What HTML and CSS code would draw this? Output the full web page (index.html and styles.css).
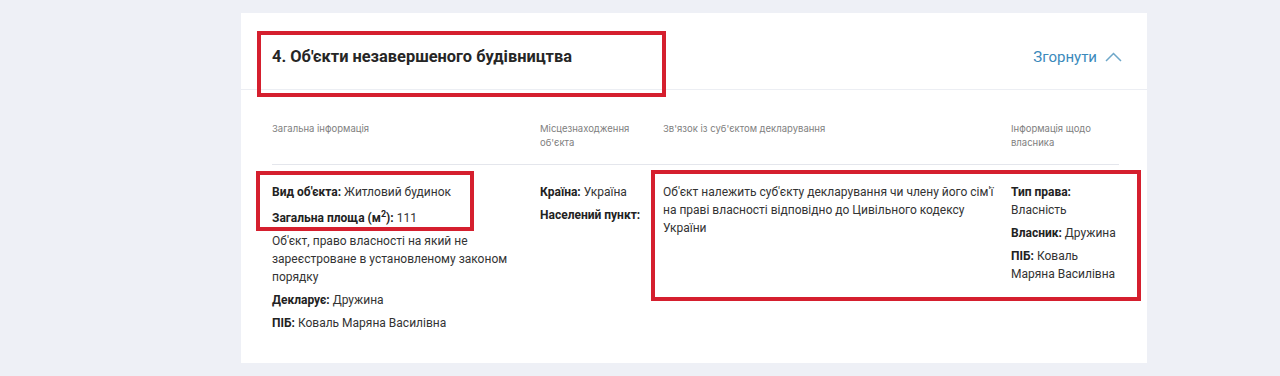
FILE: index.html
```html
<!DOCTYPE html>
<html lang="uk">
<head>
    <meta charset="UTF-8">
    <meta name="viewport" content="width=device-width, initial-scale=1.0">
    <title>Об'єкти незавершеного будівництва</title>
    <link rel="stylesheet" href="styles.css">
</head>
<body>
    <div class="card">
        <div class="card-header">
            <h2>4. Об'єкти незавершеного будівництва</h2>
            <a class="toggle" href="#">Згорнути
                <svg width="17" height="10" viewBox="0 0 17 10"><path d="M1 9 L8.5 1.5 L16 9" fill="none" stroke="#6ea7c9" stroke-width="1.5"/></svg>
            </a>
        </div>
        <div class="table">
            <div class="thead">
                <div>Загальна інформація</div>
                <div>Місцезнаходження об'єкта</div>
                <div>Зв'язок із суб'єктом декларування</div>
                <div>Інформація щодо власника</div>
            </div>
            <div class="row">
                <div class="cell">
                    <p><b>Вид об'єкта:</b> Житловий будинок</p>
                    <p class="area"><b>Загальна площа (м<sup>2</sup>):</b> 111</p>
                    <p>Об'єкт, право власності на який не зареєстроване в установленому законом порядку</p>
                    <p><b>Декларує:</b> Дружина</p>
                    <p><b>ПІБ:</b> Коваль Маряна Василівна</p>
                </div>
                <div class="cell">
                    <p><b>Країна:</b> Україна</p>
                    <p><b>Населений пункт:</b></p>
                </div>
                <div class="cell">
                    <p>Об'єкт належить суб'єкту декларування чи члену його сім'ї на праві власності відповідно до Цивільного кодексу України</p>
                </div>
                <div class="cell">
                    <p><b>Тип права:</b> Власність</p>
                    <p><b>Власник:</b> Дружина</p>
                    <p><b>ПІБ:</b> Коваль Маряна Василівна</p>
                </div>
            </div>
        </div>
    </div>

    <!-- red annotation frames drawn over the screenshot -->
    <div class="mark mark-title"></div>
    <div class="mark mark-area"></div>
    <div class="mark mark-link"></div>
</body>
</html>
```

FILE: styles.css
```css
body {
    font-family: Roboto, "Liberation Sans", sans-serif;
    background-color: #eef0f6;
    color: #333;
    margin: 0;
    padding: 13px 0 0 241px;
    position: relative;
    height: 363px;
    overflow: hidden;
}
.card {
    background: white;
    width: 906px;
    height: 350px;
    box-sizing: border-box;
}
.card-header {
    display: flex;
    justify-content: space-between;
    align-items: center;
    padding: 34px 27px 22px 31px;
    border-bottom: 1px solid #eceef3;
}
.card-header h2 {
    margin: 0;
    font-size: 16.4px;
    line-height: 20px;
    font-weight: 700;
    color: #262626;
}
.toggle {
    color: #3b8abb;
    text-decoration: none;
    font-size: 15px;
    line-height: 20px;
    display: flex;
    align-items: center;
    gap: 8px;
    margin-right: -2px;
}
.table {
    padding: 32px 28px 0 31px;
}
.thead, .row {
    display: grid;
    grid-template-columns: 251px 106px 331px 107px;
    column-gap: 17px;
}
.thead {
    font-family: Inter, "Open Sans", sans-serif;
    font-size: 9.5px;
    line-height: 14px;
    color: #808080;
    padding-bottom: 14px;
    border-bottom: 1px solid #e4e6ec;
}
.row {
    padding-top: 18px;
    font-size: 12px;
    line-height: 18px;
}
.cell p {
    margin: 0 0 5px;
}
.cell p.area {
    padding-top: 3px;
}
.cell b {
    font-weight: 700;
    color: #222;
}
sup {
    font-size: 9px;
    line-height: 9px;
}
.mark {
    position: absolute;
    border: 4px solid #d51f2e;
    box-sizing: border-box;
}
.mark-title {
    left: 257px;
    top: 31px;
    width: 409px;
    height: 66px;
}
.mark-area {
    left: 256px;
    top: 171px;
    width: 218px;
    height: 60px;
}
.mark-link {
    left: 651px;
    top: 170px;
    width: 490px;
    height: 131px;
}
```
